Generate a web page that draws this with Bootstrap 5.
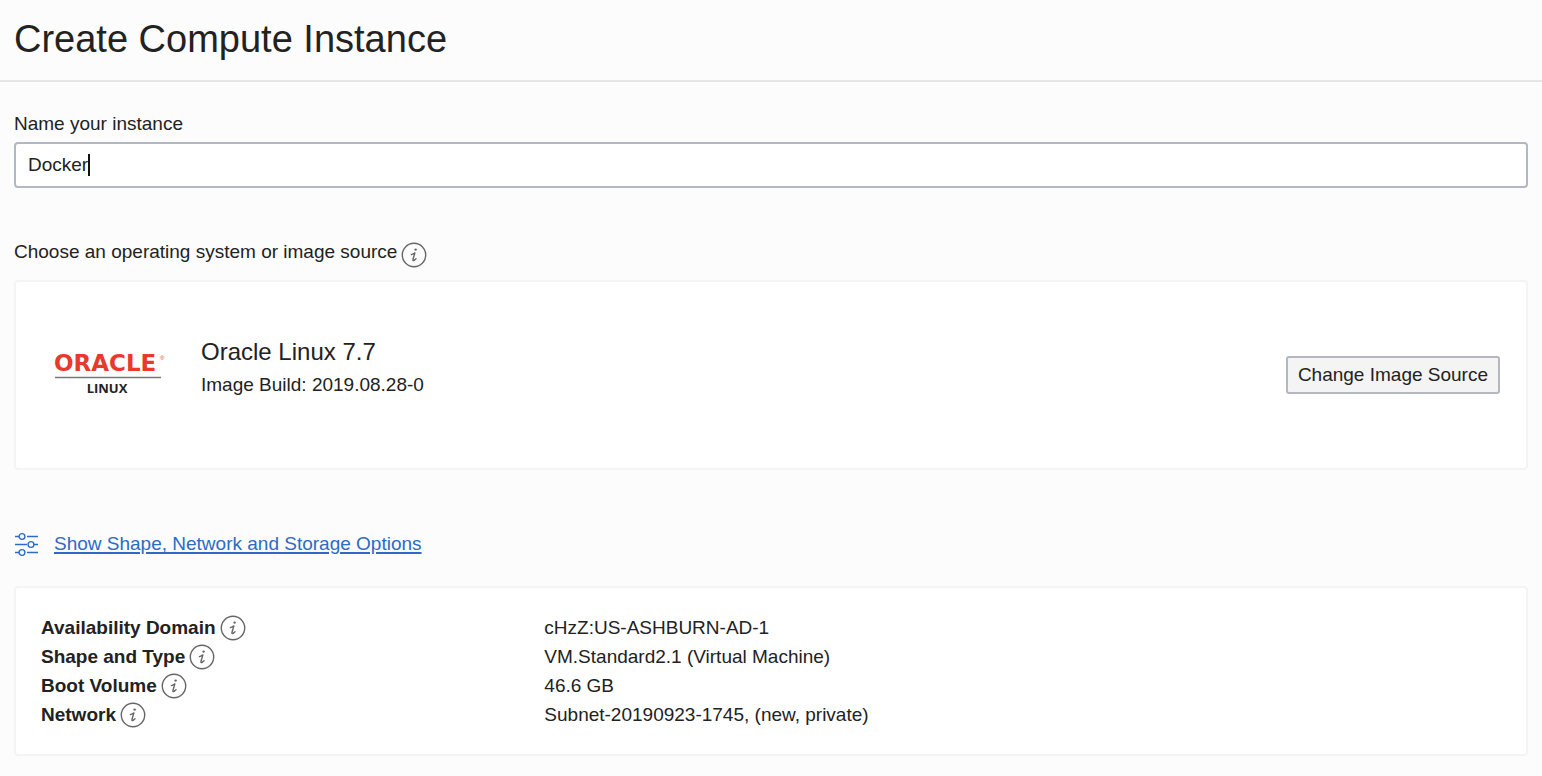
<!DOCTYPE html>
<html lang="en">
<head>
<meta charset="utf-8">
<meta name="viewport" content="width=device-width, initial-scale=1">
<title>Create Compute Instance</title>
<link href="https://cdn.jsdelivr.net/npm/bootstrap@5.3.0/dist/css/bootstrap.min.css" rel="stylesheet">
<style>
  body { font-family: "Liberation Sans", Arial, sans-serif; font-size: 19px; line-height: 28px; color: #222; background: #fcfcfc; }
  .page-head { height: 82px; padding-bottom: 2px; border-bottom: 2px solid #e6e6e6; }
  .page-head h1 { font-size: 38px; line-height: 46px; font-weight: 400; }
  .gutter { padding-left: 14px; padding-right: 14px; }
  .field-label { line-height: 28px; margin-bottom: 4px; }
  .name-input { height: 46px; padding: 0 12px; font-size: 19px; color: #222; background: #fff; border: 2px solid #b3b7bf; border-radius: 4px; }
  .name-input:focus { border-color: #8f96a3; box-shadow: none; }
  .caret { position: absolute; left: 74px; top: 12px; width: 2px; height: 22px; background: #111; }
  .panel { background: #fff; border: 2px solid #f4f4f4; border-radius: 4px; }
  .source-label { line-height: 24px; gap: 4px; }
  .source-label .info-btn { margin-top: 2px; }
  .image-panel { min-height: 190px; padding: 0 26px 0 38px; }
  .logo-cell { width: 147px; padding-bottom: 4px; }
  .image-text { padding-bottom: 16px; }
  .image-name { font-size: 24px; line-height: 34px; margin-bottom: 2px; font-weight: 400; }
  .source-btn { height: 38px; padding: 0 10px; font-size: 19px; line-height: 34px; color: #222; background: #f4f4f4; border: 2px solid #b3b7bf; border-radius: 3px; }
  .info-btn { width: 26px; height: 26px; color: #666; }
  .options { padding-top: 60px; color: #2d6bc4; }
  .options a { color: inherit; text-decoration-thickness: 2px; text-underline-offset: 2px; }
  .summary { margin-top: 28px; padding: 25px 0; }
  .summary dt, .summary dd { padding-left: 25px; line-height: 29px; font-size: 19px; }
  .summary dt { gap: 4px; font-weight: 700; }
</style>
</head>
<body>
<svg class="d-none" aria-hidden="true">
  <symbol id="info" viewBox="0 0 26 26">
    <circle cx="13" cy="13" r="11.7" fill="none" stroke="currentColor" stroke-width="1.4"/>
    <circle cx="14.6" cy="7.6" r="1.2" fill="currentColor"/>
    <path d="M10.4 12.6 Q12.4 12 13.9 10.9 L12 17.3 Q11.6 19.2 13.1 18.4 L15 16.8" fill="none" stroke="currentColor" stroke-width="1.4" stroke-linecap="round" stroke-linejoin="round"/>
  </symbol>
</svg>

<header class="page-head gutter d-flex align-items-center">
  <h1 class="mb-0">Create Compute Instance</h1>
</header>

<main class="gutter">
  <div class="pt-4">
    <label for="name" class="field-label d-block pt-1">Name your instance</label>
    <div class="position-relative">
      <input type="text" id="name" class="form-control name-input" value="Docker">
      <span class="caret"></span>
    </div>
  </div>

  <section>
    <div class="source-label d-flex align-items-start mt-5 pt-1 mb-2 pb-1">
      <span>Choose an operating system or image source</span>
      <button type="button" class="btn p-0 border-0 info-btn d-flex" aria-label="Image source help"><svg width="26" height="26"><use href="#info"/></svg></button>
    </div>
    <div class="panel image-panel d-flex align-items-center">
      <div class="logo-cell">
        <svg width="112" height="50" viewBox="0 0 112 50" role="img" aria-label="Oracle Linux" class="d-block">
          <text x="0" y="23" font-family="DejaVu Sans" font-weight="700" font-size="23" fill="#e8392c">ORACLE</text>
          <text x="106" y="12" font-family="Liberation Sans" font-size="6" fill="#e8392c">®</text>
          <path d="M1 29.5H107" stroke="#777" stroke-width="1.4"/>
          <text x="53" y="45" text-anchor="middle" font-family="Open Sans" font-weight="700" font-size="13" fill="#222">LINUX</text>
        </svg>
      </div>
      <div class="image-text flex-grow-1">
        <h2 class="image-name">Oracle Linux 7.7</h2>
        <div>Image Build: 2019.08.28-0</div>
      </div>
      <button type="button" class="btn source-btn">Change Image Source</button>
    </div>
  </section>

  <div class="options d-flex align-items-center">
    <svg width="24" height="24" viewBox="0 0 24 24" fill="none" stroke="currentColor" stroke-width="1.4" aria-hidden="true">
      <path d="M1 4.5H5M13 4.5H24M1 12.5H13M20 12.5H24M1 20.5H5M13 20.5H24"/>
      <circle cx="8" cy="4.5" r="2.9"/><circle cx="17" cy="12.5" r="2.9"/><circle cx="8" cy="20.5" r="2.9"/>
    </svg>
    <a href="#summary" class="ms-3">Show Shape, Network and Storage Options</a>
  </div>

  <dl id="summary" class="panel summary row g-0 mb-3">
    <dt class="col-4 d-flex align-items-center">Availability Domain
      <button type="button" class="btn p-0 border-0 info-btn d-flex" aria-label="Availability Domain help"><svg width="26" height="26"><use href="#info"/></svg></button></dt>
    <dd class="col-8 mb-0">cHzZ:US-ASHBURN-AD-1</dd>
    <dt class="col-4 d-flex align-items-center">Shape and Type
      <button type="button" class="btn p-0 border-0 info-btn d-flex" aria-label="Shape and Type help"><svg width="26" height="26"><use href="#info"/></svg></button></dt>
    <dd class="col-8 mb-0">VM.Standard2.1 (Virtual Machine)</dd>
    <dt class="col-4 d-flex align-items-center">Boot Volume
      <button type="button" class="btn p-0 border-0 info-btn d-flex" aria-label="Boot Volume help"><svg width="26" height="26"><use href="#info"/></svg></button></dt>
    <dd class="col-8 mb-0">46.6 GB</dd>
    <dt class="col-4 d-flex align-items-center">Network
      <button type="button" class="btn p-0 border-0 info-btn d-flex" aria-label="Network help"><svg width="26" height="26"><use href="#info"/></svg></button></dt>
    <dd class="col-8 mb-0">Subnet-20190923-1745, (new, private)</dd>
  </dl>
</main>
<script src="https://cdn.jsdelivr.net/npm/bootstrap@5.3.0/dist/js/bootstrap.bundle.min.js"></script>
</body>
</html>
